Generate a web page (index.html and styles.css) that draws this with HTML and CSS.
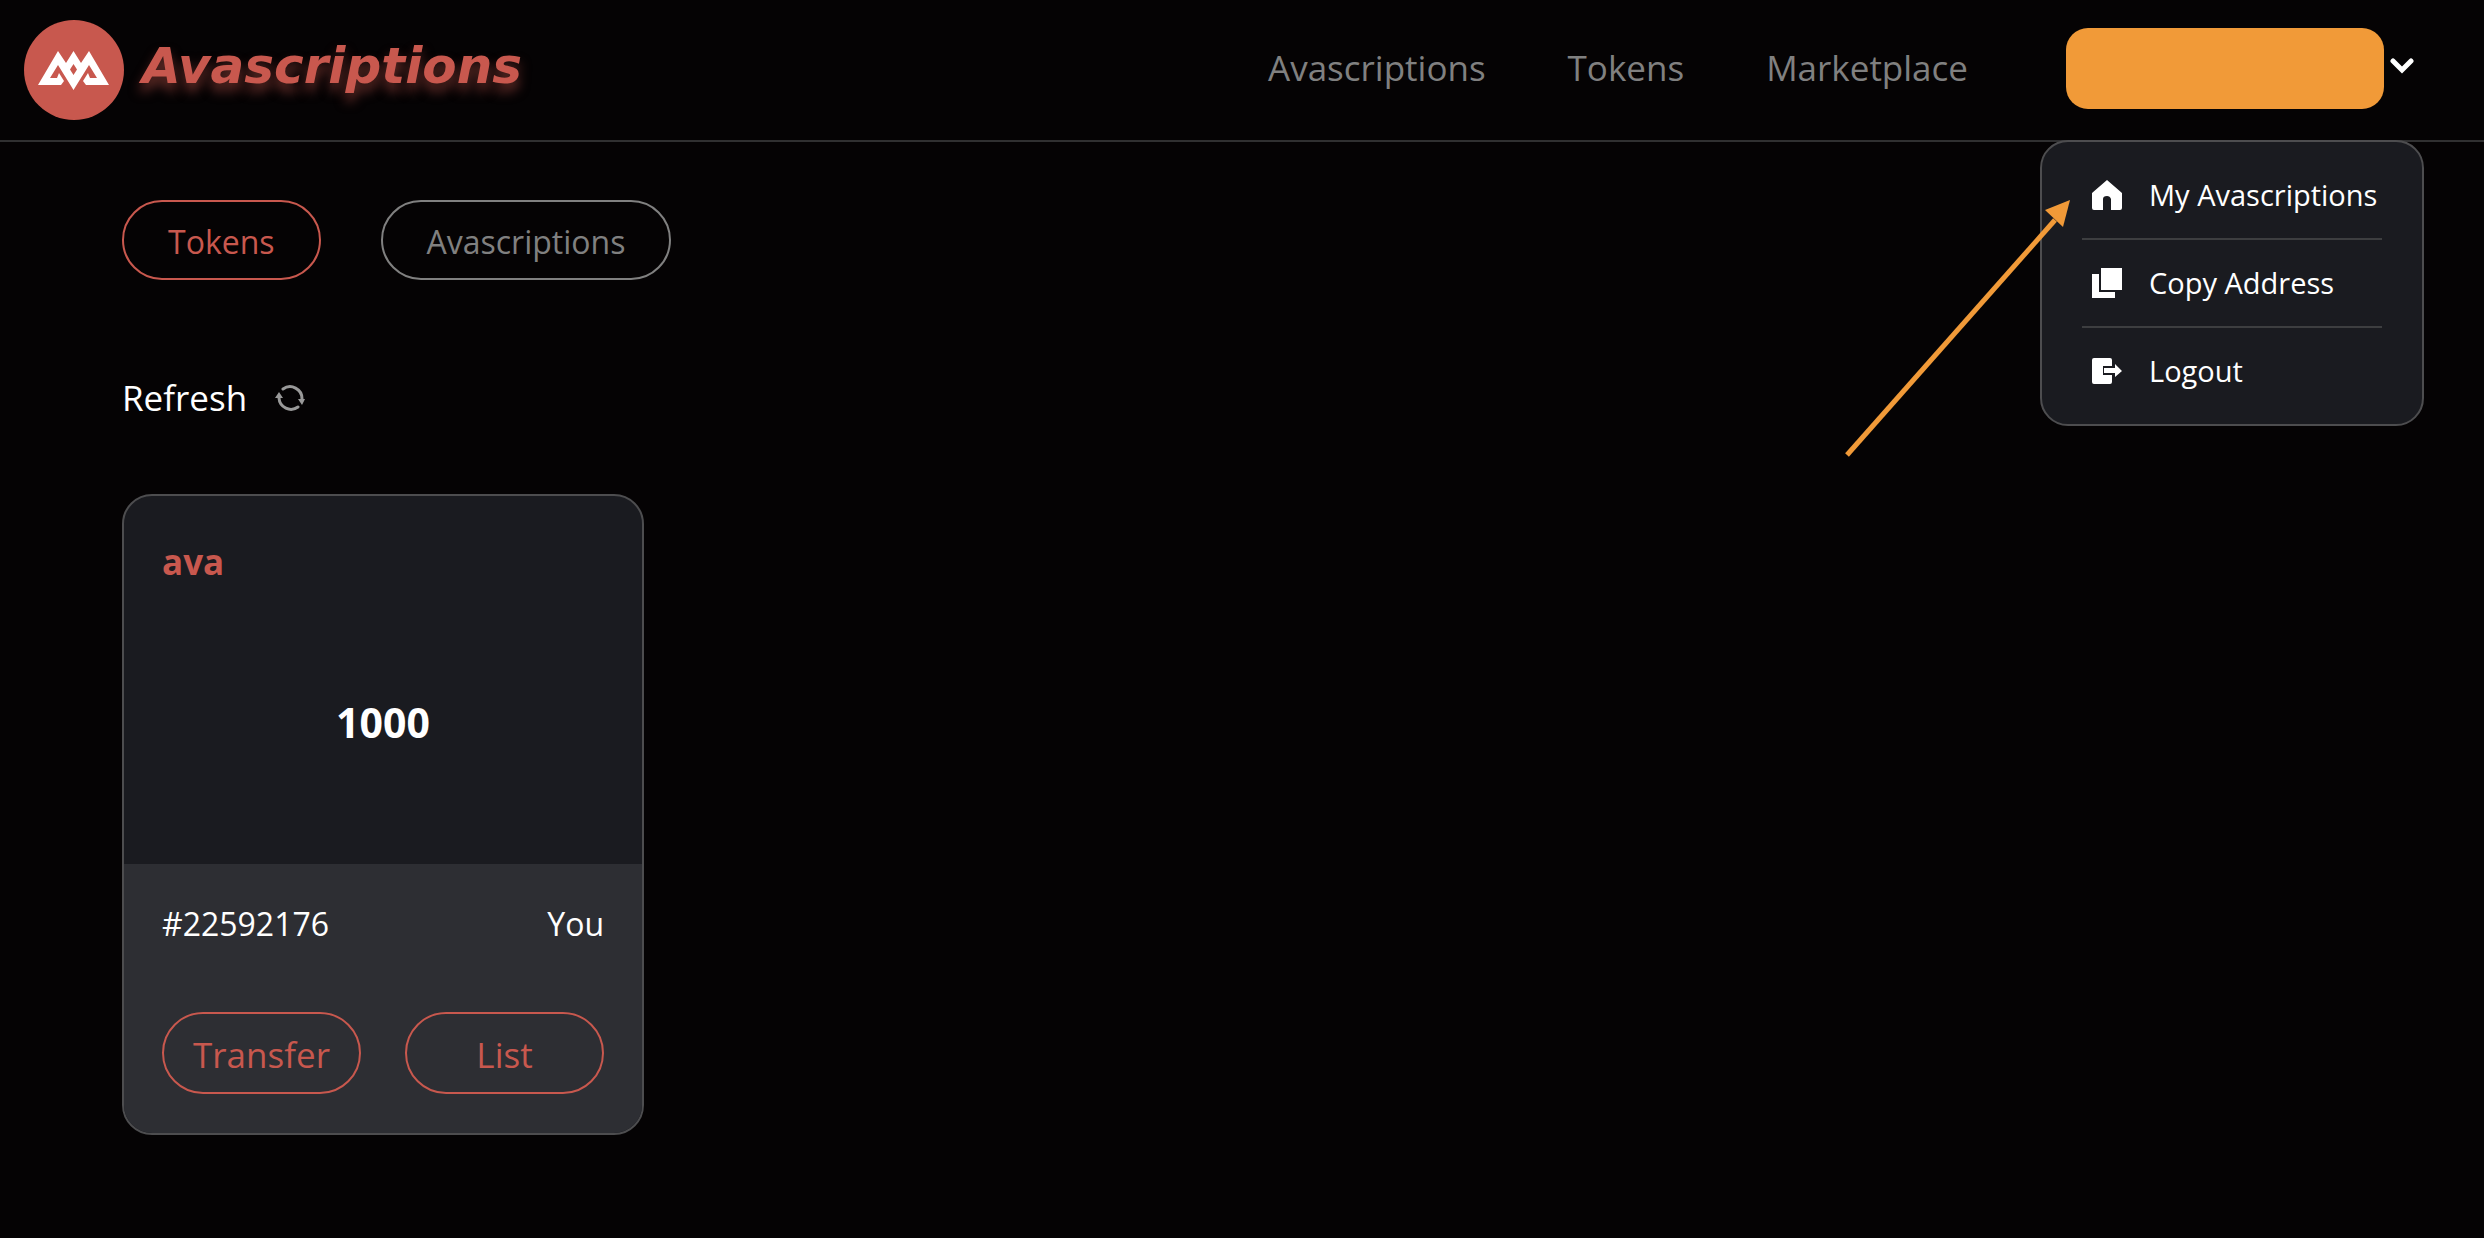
FILE: index.html
```
<!DOCTYPE html>
<html lang="en">
<head>
    <meta charset="UTF-8">
    <meta name="viewport" content="width=device-width, initial-scale=1.0">
    <title>Avascriptions</title>
    <link rel="stylesheet" href="styles.css">
</head>
<body>
    <header class="header">
        <a class="brand" href="#">
            <svg class="brand-logo" viewBox="0 0 100 100" aria-hidden="true">
                <circle cx="50" cy="50" r="50" fill="#c8584e"/>
                <path fill="#fff" fill-rule="evenodd" d="M14 65 L34 31 L42 43 L49.500 31 L57 43 L65 31 L85 65 H62 L59 61 L64 53 L66 58 H73 L65 45 L49.500 70 L34 45 L26 58 H33 L35 53 L40 61 L37 65 Z M49.500 44 L46 49.500 L49.500 55 L53 49.500 Z"/>
            </svg>
            <span class="brand-name">Avascriptions</span>
        </a>

        <nav class="nav">
            <a href="#">Avascriptions</a>
            <a href="#">Tokens</a>
            <a href="#">Marketplace</a>
        </nav>

        <div class="account">
            <button class="account-btn" type="button" aria-label="Account menu">
                <span class="account-name"></span>
                <svg class="chevron" viewBox="0 0 24 16" aria-hidden="true"><path d="M3 3 L12 12 L21 3"/></svg>
            </button>

            <ul class="menu">
                <li>
                    <a href="#">
                        <svg viewBox="0 0 32 32" aria-hidden="true"><path d="M16 1 L31 14 V29 Q31 31 29 31 H20 V20 Q19 17 16 17 Q12 17 12 20 V31 H3 Q1 31 1 29 V14 Z"/></svg>
                        My Avascriptions
                    </a>
                </li>
                <li>
                    <button type="button">
                        <svg viewBox="0 0 32 32" aria-hidden="true"><path d="M10 1 H31 V23 H10 Z M1 7 H8 V25 H24 V31 H1 Z"/></svg>
                        Copy Address
                    </button>
                </li>
                <li>
                    <button type="button">
                        <svg viewBox="0 0 32 32" aria-hidden="true"><path d="M3 3 H19 Q21 3 21 5 V11 H12 V20 H21 V27 Q21 29 19 29 H3 Q1 29 1 27 V5 Q1 3 3 3 Z M13 13 H24 V9 L31 16 L24 22 V18 H13 Z"/></svg>
                        Logout
                    </button>
                </li>
            </ul>

            <svg class="pointer" viewBox="0 0 230 262" aria-hidden="true">
                <path d="M3 257 L211 22" fill="none" stroke="#f19a38" stroke-width="5"/>
                <path d="M226 2 L219 29 L201 12 Z" fill="#f19a38"/>
            </svg>
        </div>
    </header>

    <main class="content">
        <div class="tabs">
            <button class="pill active" type="button">Tokens</button>
            <button class="pill" type="button">Avascriptions</button>
        </div>

        <button class="refresh" type="button">
            Refresh
            <svg viewBox="0 0 30 28" aria-hidden="true">
                <path class="arc" d="M8 5 A12 12 0 0 1 27 15"/>
                <path class="arc" d="M23 23 A12 12 0 0 1 4 14"/>
                <path class="tip" d="M23 15 H30 L27 21 Z M0 14 H8 L4 8 Z"/>
            </svg>
        </button>

        <div class="cards">
            <article class="card">
                <div class="card-top">
                    <h2>ava</h2>
                    <p class="amount">1000</p>
                </div>
                <div class="card-bottom">
                    <div class="card-info">
                        <span>#22592176</span>
                        <span>You</span>
                    </div>
                    <div class="card-actions">
                        <button type="button">Transfer</button>
                        <button type="button">List</button>
                    </div>
                </div>
            </article>
        </div>
    </main>
</body>
</html>
```
FILE: styles.css
```
* {
    margin: 0;
    padding: 0;
    box-sizing: border-box;
}

body {
    font-family: 'Open Sans', 'Noto Sans', sans-serif;
    background: #050304;
    min-height: 100vh;
    color: #fff;
}

a {
    color: inherit;
    text-decoration: none;
}

button {
    font: inherit;
    color: inherit;
    background: transparent;
    border: none;
    cursor: pointer;
}

.header {
    display: flex;
    align-items: center;
    height: 142px;
    padding: 0 70px 0 24px;
    border-bottom: 2px solid #303031;
}

.brand {
    display: flex;
    align-items: center;
    gap: 18px;
    margin-right: auto;
}

.brand-logo {
    width: 100px;
    height: 100px;
}

.brand-name {
    font-family: 'DejaVu Sans', sans-serif;
    font-size: 50px;
    line-height: 60px;
    padding-bottom: 8px;
    font-weight: bold;
    font-style: italic;
    color: #c8584e;
    text-shadow: 0 8px 12px rgba(200, 88, 78, 0.5);
}

.nav {
    display: flex;
    gap: 82px;
    margin-right: 98px;
    font-size: 35px;
    line-height: 48px;
    padding-bottom: 4px;
    color: #808080;
}

.account {
    position: relative;
}

.account-btn {
    display: flex;
    align-items: center;
    gap: 6px;
    padding-bottom: 4px;
}

.account-name {
    width: 318px;
    height: 81px;
    border-radius: 22px;
    background: #f19a38;
}

.chevron {
    width: 24px;
    height: 16px;
    margin-bottom: 4px;
}

.chevron path {
    fill: none;
    stroke: #fff;
    stroke-width: 5;
    stroke-linecap: round;
}

/* drop-down under the account button */
.menu {
    position: absolute;
    top: 112px;
    right: -10px;
    width: 384px;
    padding: 10px 40px;
    list-style: none;
    background: #1a1b20;
    border: 2px solid #4d4d4f;
    border-radius: 28px;
}

.menu li + li {
    border-top: 2px solid #3d3e40;
}

.menu a,
.menu button {
    display: flex;
    align-items: center;
    gap: 26px;
    width: 100%;
    height: 86px;
    padding-left: 9px;
    font-size: 29px;
    white-space: nowrap;
}

.menu svg {
    width: 32px;
    height: 32px;
    fill: #fff;
}

.pointer {
    position: absolute;
    top: 170px;
    right: 340px;
    width: 230px;
    height: 262px;
}

.content {
    padding: 58px 122px;
}

.tabs {
    display: flex;
    gap: 60px;
}

.pill {
    height: 80px;
    padding: 2px 44px 0;
    font-size: 32px;
    color: #808080;
    border: 2px solid #808080;
    border-radius: 40px;
}

.pill.active {
    color: #c8584e;
    border-color: #c8584e;
}

.refresh {
    display: flex;
    align-items: center;
    gap: 28px;
    margin-top: 92px;
    font-size: 35px;
    line-height: 52px;
}

.refresh svg {
    width: 30px;
    height: 28px;
}

.refresh .arc {
    fill: none;
    stroke: #999;
    stroke-width: 3;
    stroke-linecap: round;
}

.refresh .tip {
    fill: #999;
}

.cards {
    display: flex;
    margin-top: 70px;
}

.card {
    width: 522px;
    overflow: hidden;
    border: 2px solid #4d4d4f;
    border-radius: 30px;
    background: #1a1b20;
}

.card-top {
    height: 368px;
    padding: 40px 38px;
}

.card h2 {
    font-size: 35px;
    line-height: 52px;
    color: #c8584e;
}

.amount {
    margin-top: 106px;
    font-size: 41px;
    line-height: 56px;
    font-weight: bold;
    text-align: center;
}

.card-bottom {
    padding: 36px 38px 39px;
    background: #2d2e33;
}

.card-info {
    display: flex;
    justify-content: space-between;
    font-size: 32px;
    line-height: 48px;
}

.card-actions {
    display: flex;
    gap: 44px;
    margin-top: 64px;
}

.card-actions button {
    flex: 1 1 0;
    height: 82px;
    padding-top: 2px;
    font-size: 35px;
    color: #c8584e;
    border: 2px solid #c8584e;
    border-radius: 41px;
}
```
